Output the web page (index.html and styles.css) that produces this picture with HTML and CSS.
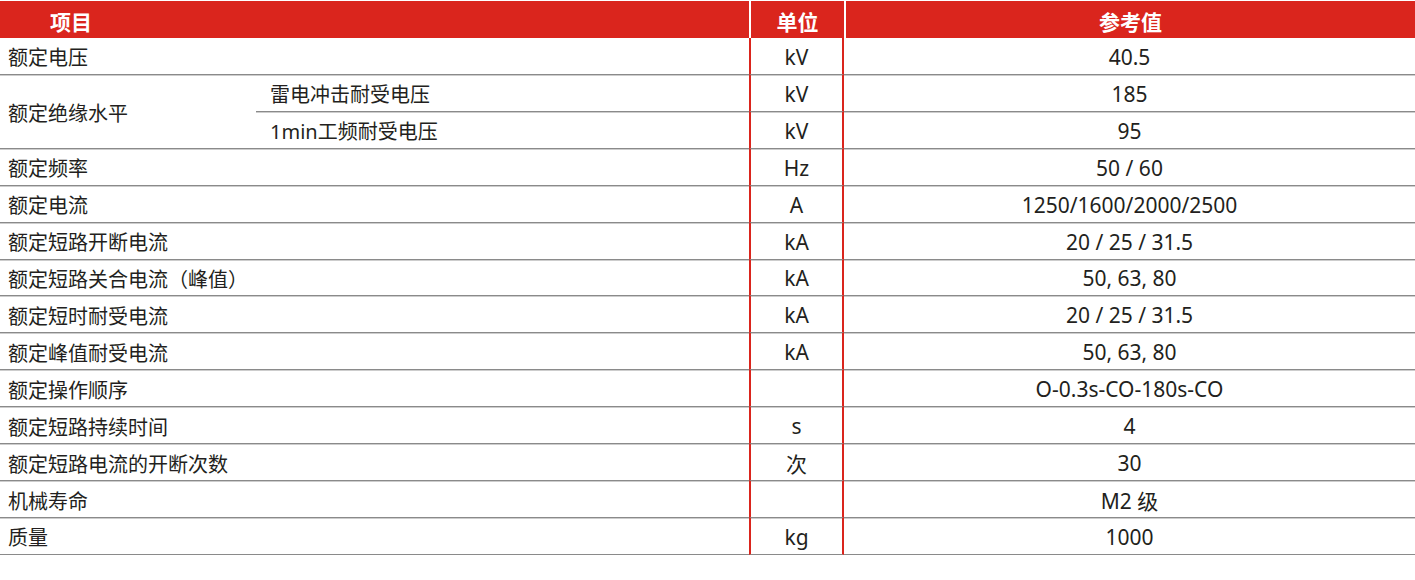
FILE: index.html
```html
<!DOCTYPE html>
<html lang="zh-CN">
<head>
<meta charset="utf-8">
<title>技术参数</title>
<link rel="stylesheet" href="styles.css">
</head>
<body>
<div class="spec">
  <div class="head">
    <div class="hcell hitem">项目</div>
    <div class="hcell hunit">单位</div>
    <div class="hcell hval">参考值</div>
  </div>
  <div class="grid">
    <div class="c lab span2">额定电压</div><div class="c unit">kV</div><div class="c val">40.5</div>

    <div class="c lab tall">额定绝缘水平</div><div class="c sub">雷电冲击耐受电压</div><div class="c unit">kV</div><div class="c val">185</div>
    <div class="c sub">1min工频耐受电压</div><div class="c unit">kV</div><div class="c val">95</div>

    <div class="c lab span2">额定频率</div><div class="c unit">Hz</div><div class="c val">50 / 60</div>
    <div class="c lab span2">额定电流</div><div class="c unit">A</div><div class="c val">1250/1600/2000/2500</div>
    <div class="c lab span2">额定短路开断电流</div><div class="c unit">kA</div><div class="c val">20 / 25 / 31.5</div>
    <div class="c lab span2">额定短路关合电流（峰值）</div><div class="c unit">kA</div><div class="c val">50, 63, 80</div>
    <div class="c lab span2">额定短时耐受电流</div><div class="c unit">kA</div><div class="c val">20 / 25 / 31.5</div>
    <div class="c lab span2">额定峰值耐受电流</div><div class="c unit">kA</div><div class="c val">50, 63, 80</div>
    <div class="c lab span2">额定操作顺序</div><div class="c unit"></div><div class="c val">O-0.3s-CO-180s-CO</div>
    <div class="c lab span2">额定短路持续时间</div><div class="c unit">s</div><div class="c val">4</div>
    <div class="c lab span2">额定短路电流的开断次数</div><div class="c unit">次</div><div class="c val">30</div>
    <div class="c lab span2">机械寿命</div><div class="c unit"></div><div class="c val">M2 级</div>
    <div class="c lab span2">质量</div><div class="c unit">kg</div><div class="c val">1000</div>
  </div>
</div>
</body>
</html>
```

FILE: styles.css
```css
html, body {
  margin: 0;
  padding: 0;
  background: #ffffff;
}

body {
  font-family: "Noto Sans", "Noto Sans CJK SC", sans-serif;
  color: #231f20;
  width: 1415px;
}

.spec {
  padding-top: 1px;
}

.head {
  display: grid;
  grid-template-columns: 749px 93px 1fr;
  column-gap: 2px;
  background: #ffffff;
  height: 37px;
}

.hcell {
  background: #da251d;
  color: #ffffff;
  font-family: "Noto Sans CJK SC", sans-serif;
  font-weight: 700;
  font-size: 21px;
  display: flex;
  align-items: center;
  padding-top: 3px;
  box-sizing: border-box;
}

.hitem {
  padding-left: 50px;
}

.hunit,
.hval {
  justify-content: center;
}

.grid {
  display: grid;
  grid-template-columns: 256px 493px 95px 1fr;
  grid-auto-rows: 36.93px;
}

.c {
  display: flex;
  align-items: center;
  box-sizing: border-box;
  border-bottom: 1px solid #8a8a8a;
  box-shadow: 0 1px 0 #cdcdcd;
  padding-top: 2px;
}

.lab {
  font-size: 20px;
  padding-left: 8px;
}

.span2 {
  grid-column: 1 / 3;
}

.tall {
  grid-row: span 2;
}

.sub {
  grid-column: 2;
  font-size: 20px;
  padding-left: 14px;
}

.unit {
  grid-column: 3;
  justify-content: center;
  font-size: 21px;
  border-left: 2px solid #da251d;
  border-right: 2px solid #da251d;
}

.val {
  grid-column: 4;
  justify-content: center;
  font-size: 21px;
}
```
